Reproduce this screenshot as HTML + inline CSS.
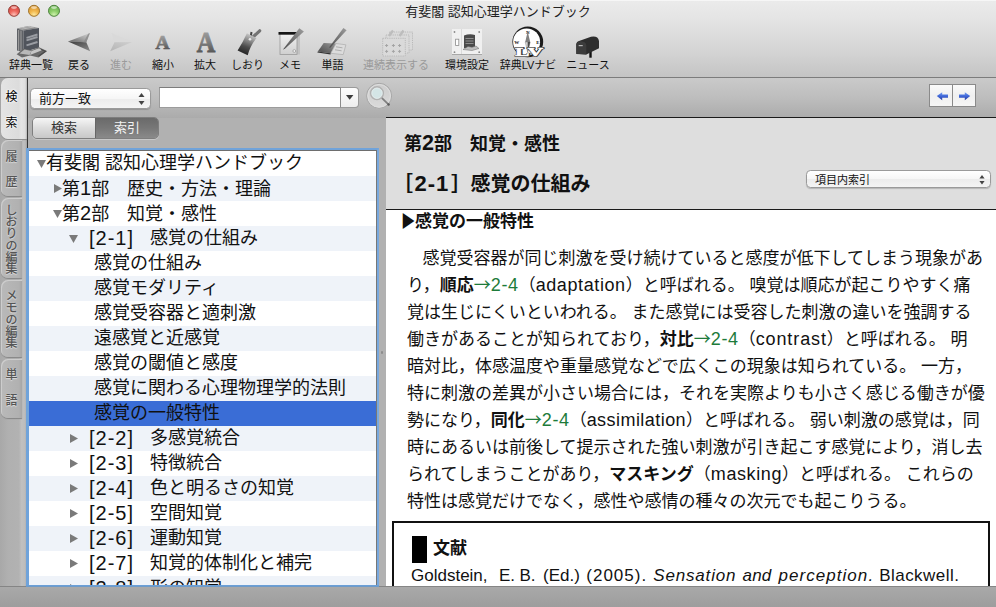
<!DOCTYPE html>
<html lang="ja">
<head>
<meta charset="utf-8">
<title>有斐閣 認知心理学ハンドブック</title>
<style>
html,body{margin:0;padding:0;}
body{width:996px;height:607px;overflow:hidden;position:relative;background:#b4b4b4;
 font-family:"Liberation Sans","Noto Sans CJK JP",sans-serif;color:#000;}
.abs{position:absolute;}
#win{position:absolute;left:0;top:0;width:996px;height:607px;overflow:hidden;}
/* toolbar */
#tb{position:absolute;left:0;top:0;width:996px;height:77px;
 background:linear-gradient(#ebebeb 0,#e4e4e4 20px,#d2d2d2 55px,#c4c4c4 77px);}
#tbline{position:absolute;left:0;top:77px;width:996px;height:1px;background:#7c7c7c;}
#title{position:absolute;left:0;top:3px;width:996px;text-align:center;font-size:13px;line-height:18px;color:#222;}
.tl{position:absolute;top:5px;width:12px;height:12px;border-radius:50%;box-sizing:border-box;}
.tbl{position:absolute;top:57px;font-size:11px;line-height:16px;color:#111;white-space:nowrap;text-align:center;transform:translateX(-50%);}
.tbl.dis{color:#9a9a9a;}
/* main bg */
#main{position:absolute;left:0;top:78px;width:996px;height:508px;background:#b1b1b1;}
#topbar{position:absolute;left:0;top:78px;width:996px;height:40px;background:linear-gradient(#cacaca,#bdbdbd 50%,#ababab);}
#lstrip{position:absolute;left:0;top:78px;width:27px;height:508px;background:linear-gradient(90deg,#a8a8a8,#b0b0b0 30%,#b2b2b2 70%,#c0c0c0 80%,#bcbcbc 93%,#a0a0a0);}
#lline{position:absolute;left:27px;top:78px;width:1px;height:70px;background:#333;}
#bottom{position:absolute;left:0;top:586px;width:996px;height:21px;background:linear-gradient(#a9a9a9,#9d9d9d);border-top:1px solid #858585;box-sizing:border-box;}
/* side tabs */
.vtab{position:absolute;left:1px;width:21px;box-sizing:border-box;border-radius:7px 0 0 7px;
 background:linear-gradient(90deg,#b9b9b9 0,#b1b1b1 85%,#a6a6a6 100%);color:#555;font-weight:500;text-shadow:0 1px 1px #dcdcdc,0 0 2px #d0d0d0;
 box-shadow:0 1px 1px #868686, inset 1px 1px 0 #cdcdcd;}
.vtab span{position:absolute;left:-1.500px;width:24px;text-align:center;line-height:14px;font-size:12px;}
.vtab.on{width:26px;background:linear-gradient(90deg,#e4e4e4 0,#dcdcdc 68%,#e4e4e4 78%,#dedede 93%,#b4b4b4 100%);color:#000;font-weight:400;text-shadow:0 0 2px #fff,0 0 3px #fff,0 0 3px #fff;box-shadow:0 1px 1px #8a8a8a;}
/* left controls */
.pop{position:absolute;box-sizing:border-box;border:1px solid #9a9a9a;border-radius:4.5px;background:linear-gradient(#ffffff,#f6f6f6 50%,#ececec 51%,#f4f4f4);box-shadow:0 1px 1px rgba(0,0,0,.18);}
.pop span{position:absolute;white-space:nowrap;color:#111;}
#inp{position:absolute;left:159px;top:87px;width:182px;height:21px;box-sizing:border-box;background:#fff;border:1px solid #9c9c9c;border-top-color:#7c7c7c;}
#dd{position:absolute;left:340px;top:87px;width:19px;height:21px;box-sizing:border-box;border:1px solid #9a9a9a;border-left-color:#8a8a8a;border-radius:0 4px 4px 0;background:linear-gradient(#fdfdfd,#ededed);}
#seg{position:absolute;left:32px;top:117px;width:127px;height:22px;box-sizing:border-box;border:1px solid #7e7e7e;border-radius:5px;overflow:hidden;box-shadow:0 1px 0 rgba(255,255,255,.3);}
#seg1{position:absolute;left:0;top:0;width:62px;height:20px;background:linear-gradient(#f6f6f6,#dcdcdc 50%,#c8c8c8);font-size:13px;line-height:19px;text-align:center;color:#333;}
#seg2{position:absolute;left:62px;top:0;width:63px;height:20px;background:linear-gradient(#6a6a6a,#777 50%,#8a8a8a);font-size:13px;line-height:19px;text-align:center;color:#f2f2f2;border-left:1px solid #666;box-sizing:border-box;}
#list{position:absolute;left:26px;top:148px;width:353px;height:440px;box-sizing:border-box;border:3px solid #70a3da;border-top-width:2px;border-right:2px solid #78a8de;background:#fff;overflow:hidden;}
#listin{position:absolute;left:0;top:0;width:348px;height:440px;box-sizing:border-box;border-top:1px solid #6e6e6e;border-right:1px solid #777;}
.row{position:absolute;left:0;width:347px;height:25px;font-size:18px;line-height:25px;white-space:nowrap;color:#111;}
.row.alt{background:#eff3f9;}
.row.sel{background:#3a6dd6;}
.row .en{font-size:20px;}
.row .br{font-size:20px;letter-spacing:1px;}
#split{position:absolute;left:381px;top:351px;width:2px;height:3px;background:#8c8c8c;border-radius:1px;}
/* right */
#rline1{position:absolute;left:386px;top:117px;width:610px;height:1px;background:#1a1a1a;}
#rhead{position:absolute;left:386px;top:118px;width:610px;height:91px;background:#dedede;}
#rline2{position:absolute;left:386px;top:209px;width:610px;height:1px;background:#1a1a1a;}
#content{position:absolute;left:386px;top:210px;width:610px;height:376px;background:#fff;}
#ctext{position:absolute;left:386px;top:209px;width:610px;height:377px;overflow:hidden;}
#nav{position:absolute;left:929px;top:84px;width:47px;height:23px;box-sizing:border-box;border:1px solid #8a8a8a;background:linear-gradient(#fafafa,#f0f0f0 50%,#f6f6f6);}
#navd{position:absolute;left:22px;top:0;width:1px;height:21px;background:#8a8a8a;}
.h1{position:absolute;font-size:18px;line-height:26px;font-weight:700;white-space:nowrap;color:#111;}
.h1 .en{font-size:21.500px;}
.h2{position:absolute;font-size:20px;line-height:30px;font-weight:700;white-space:nowrap;color:#111;}
.h2 .en{font-size:22px;letter-spacing:1px;}
#refbox{position:absolute;left:6px;top:312px;width:598px;height:80px;box-sizing:border-box;border:2px solid #111;}
#refmark{position:absolute;left:26px;top:327px;width:15px;height:27px;background:#000;}
.p.ref{font-size:17px;}
#listbot{position:absolute;left:26px;top:585px;width:353px;height:2px;background:#6a9fd6;opacity:.85;}
.p{position:absolute;left:21px;font-size:17px;line-height:27px;white-space:nowrap;color:#111;}
.p .en{font-size:18px;line-height:1px;letter-spacing:0.6px;}
.ar{font-family:"Noto Sans CJK JP",sans-serif;line-height:1px;}
.p .sp{font-size:17px;}
b{font-weight:700;}
.g{color:#1e7b3a;}
</style>
</head>
<body>
<div id="win">
<div id="tb"></div>
<div id="tbline"></div>
<div class="abs" style="left:0;top:0;width:996px;height:1px;background:#f6f6f6"></div>
<div id="title">有斐閣 認知心理学ハンドブック</div>
<svg class="abs" style="left:0;top:0" width="996" height="77" viewBox="0 0 996 77">
<defs>
<radialGradient id="gr" cx="50%" cy="88%" r="75%"><stop offset="0" stop-color="#ffc4bb"/><stop offset=".5" stop-color="#ee6a60"/><stop offset="1" stop-color="#d94a42"/></radialGradient>
<radialGradient id="gy" cx="50%" cy="88%" r="75%"><stop offset="0" stop-color="#fdeaa0"/><stop offset=".5" stop-color="#f2b84e"/><stop offset="1" stop-color="#dc9a34"/></radialGradient>
<radialGradient id="gg" cx="50%" cy="88%" r="75%"><stop offset="0" stop-color="#d2f4b0"/><stop offset=".5" stop-color="#90cf6c"/><stop offset="1" stop-color="#6db652"/></radialGradient>
<linearGradient id="gA" x1="0" y1="0" x2="0" y2="1"><stop offset="0" stop-color="#b0b0b0"/><stop offset=".5" stop-color="#7e7e7e"/><stop offset="1" stop-color="#444"/></linearGradient>
<linearGradient id="gTag" x1="0.6" y1="0" x2="0.3" y2="1"><stop offset="0" stop-color="#cccccc"/><stop offset=".3" stop-color="#8c8c8c"/><stop offset=".6" stop-color="#4c4c4c"/><stop offset="1" stop-color="#1e1e1e"/></linearGradient>
<linearGradient id="gPaper" x1="0" y1="0" x2="0" y2="1"><stop offset="0" stop-color="#f2f2f2"/><stop offset="1" stop-color="#cfcfcf"/></linearGradient>
<linearGradient id="gPen" x1="0" y1="1" x2="1" y2="0"><stop offset="0" stop-color="#4e4e4e"/><stop offset="1" stop-color="#9c9c9c"/></linearGradient>
<linearGradient id="gBackU" x1="0" y1="1" x2="1" y2="0"><stop offset="0" stop-color="#5e5e5e"/><stop offset=".55" stop-color="#a6a6a6"/><stop offset="1" stop-color="#d4d4d4"/></linearGradient>
<linearGradient id="gBackL" x1="0" y1="0" x2="1" y2="1"><stop offset="0" stop-color="#3c3c3c"/><stop offset="1" stop-color="#8c8c8c"/></linearGradient>
<linearGradient id="gFwdL" x1="1" y1="0" x2="0" y2="1"><stop offset="0" stop-color="#d0d0d0"/><stop offset="1" stop-color="#b4b4b4"/></linearGradient>
<linearGradient id="gPage" x1="1" y1="0" x2="0" y2="1"><stop offset="0" stop-color="#9a9a9a"/><stop offset="1" stop-color="#484848"/></linearGradient>
</defs>
<!-- traffic lights -->
<circle cx="14" cy="10.800" r="5.500" fill="url(#gr)" stroke="#95413a" stroke-width="1"/>
<circle cx="34" cy="10.800" r="5.500" fill="url(#gy)" stroke="#a0742c" stroke-width="1"/>
<circle cx="54" cy="10.800" r="5.500" fill="url(#gg)" stroke="#4f8540" stroke-width="1"/>
<g fill="#fff" opacity=".55"><ellipse cx="14" cy="7.600" rx="3" ry="1.400"/><ellipse cx="34" cy="7.600" rx="3" ry="1.400"/><ellipse cx="54" cy="7.600" rx="3" ry="1.400"/></g>
<!-- books -->
<g>
<polygon points="17,28.6 28,26 39,28 23.5,30.4" fill="#8c8c8c"/>
<path d="M19.200 28.300L30 26.300M21.400 29.200L34 27" stroke="#c4c4c4" stroke-width=".8"/>
<polygon points="17,28.600 23.500,30.400 23.500,52.300 17,50.500" fill="#5e6166"/>
<polygon points="23.500,30.400 39,28 39,47.500 23.500,52.300" fill="#50545c"/>
<path d="M18.600 30V50.800M21 30.600V51.500" stroke="#9c9c9c" stroke-width="1.100"/>
<path d="M26.500 37.800L37.500 34.500M26.500 40.300L37.500 37M26.500 45.300L37.500 42" stroke="#9a9da3" stroke-width="1.900"/>
<polygon points="16.600,54.300 23.500,48.800 31.500,50.200 39,47.300 47,51 38.500,57.500 30,55.600 22,57.600" fill="#6a6a6a"/>
<polygon points="19.500,53.600 24.500,49.600 31.500,51 29.500,55" fill="#b9b9b9"/>
<polygon points="31.500,51 39,48.300 42,50.300 30,55" fill="#c6c6c6"/>
<path d="M41 49.500L45.500 51.300L38.500 56.300" stroke="#4a4a4a" stroke-width="1.200" fill="none"/>
</g>
<!-- back -->
<polygon points="68,41.5 90,33 86.3,42.3" fill="url(#gBackU)"/>
<polygon points="68,41.5 86.3,42.3 90.2,51.2" fill="url(#gBackL)"/>
<polygon points="86.300,42.300 90,33 88.200,33.700 83.500,42.200" fill="#8a8a8a" opacity=".8"/>
<!-- forward (disabled) -->
<polygon points="132.3,41.9 111.4,33 114.5,42.3" fill="#d9d9d9"/>
<polygon points="132.3,41.9 114.5,42.3 110.2,51.2" fill="url(#gFwdL)"/>
<!-- A small / large -->
<text x="162.6" y="49" font-family="Liberation Serif,serif" font-weight="700" font-size="19.5" text-anchor="middle" fill="url(#gA)" stroke="url(#gA)" stroke-width=".7">A</text>
<text x="206" y="52" font-family="Liberation Serif,serif" font-weight="700" font-size="29.5" text-anchor="middle" fill="url(#gA)" stroke="url(#gA)" stroke-width=".9" textLength="18.5" lengthAdjust="spacingAndGlyphs">A</text>
<!-- bookmark tag -->
<path d="M251.5 38.5L259.7 30.8" stroke="#747474" stroke-width="3.2" stroke-linecap="round"/>
<path d="M250.5 38L251.5 32" stroke="#444" stroke-width="2"/>
<path d="M246.9 33.2L256.5 38Q250 46 247.7 55.3L237.6 50.5Q243 42 246.9 33.2Z" fill="url(#gTag)"/>
<circle cx="250" cy="39.3" r="1.3" fill="#e8e8e8"/>
<!-- memo -->
<rect x="297" y="35" width="3" height="19.500" fill="#c2c2c2"/>
<rect x="280" y="33" width="17" height="21.500" fill="url(#gPaper)" stroke="#9a9a9a" stroke-width=".8"/>
<rect x="278.500" y="32" width="19" height="2.700" fill="#161616"/>
<circle cx="294.300" cy="51" r="1.400" fill="#f4f4f4" stroke="#909090" stroke-width=".7"/>
<polygon points="282.800,49.800 299.300,28.200 303.900,31.500 285.200,48.600" fill="url(#gPen)"/>
<!-- tango (notebook + pen) -->
<polygon points="317.800,51.400 323.700,42.900 336,43.500 330.800,53.300" fill="url(#gPage)"/>
<polygon points="317.800,51.400 330.800,53.300 330.500,54.500 317.300,52.500" fill="#333"/>
<polygon points="336,43.500 345.900,44.800 343.200,54.600 330.800,53.300" fill="#dcdcdc" stroke="#a4a4a4" stroke-width=".6"/>
<path d="M336 46.800L342.500 47.800M335 49.800L341.600 50.800" stroke="#a8a8a8" stroke-width=".9"/>
<polygon points="329,47.400 343.400,28 346.600,30.200 330.400,47.800" fill="url(#gPen)"/>
<!-- renzoku (disabled) -->
<g fill="#dadada" stroke="#b6b6b6" stroke-width=".9" stroke-dasharray="1.2 1">
<rect x="389.5" y="32" width="23" height="18"/>
<rect x="386" y="35" width="23" height="18"/>
<rect x="382.7" y="38.3" width="22.6" height="17.7"/>
</g>
<path d="M389 36L393 30.5M399.5 36L403.5 30.5" stroke="#bdbdbd" stroke-width="2.4"/>
<path d="M385.1 45.5h3M386.6 44v3M391.9 45.5h3M393.4 44v3M398.1 45.5h3M399.6 44v3M385.1 51.4h3M386.6 49.9v3M391.9 51.4h3M393.4 49.9v3M398.1 51.4h3M399.6 49.9v3" stroke="#a4a4a4" stroke-width="1"/>
<!-- kankyo settei -->
<rect x="452" y="29" width="30" height="25.5" fill="#f0f0f0"/>
<rect x="452" y="54" width="30" height="1" fill="#a8a8a8"/>
<rect x="461" y="29" width="1" height="25" fill="#dadada"/>
<g fill="#8a8a8a"><circle cx="454.5" cy="32" r=".9"/><circle cx="479.2" cy="32" r=".9"/><circle cx="454.5" cy="52.2" r=".9"/><circle cx="479.2" cy="52.2" r=".9"/></g>
<rect x="455.6" y="39.2" width="3.2" height="6.3" fill="#fff" stroke="#8c8c8c" stroke-width=".8"/>
<path d="M464 35.5Q469.5 33.5 475 35V48H464Z" fill="#4a4a4a"/>
<path d="M465.5 38.5H473.5M465.5 41H473.5M465.5 43.5H473.5" stroke="#8e8e8e" stroke-width="1"/>
<path d="M463 49.5L468 46.5L472 47.3L476 46L479 48.5L472 50.5Z" fill="#bdbdbd" stroke="#6a6a6a" stroke-width=".5"/>
<!-- LV navi -->
<circle cx="527.800" cy="41.800" r="15.400" fill="#1a1a1a"/>
<circle cx="526.600" cy="41.900" r="13.500" fill="#fff"/>
<polygon points="527.700,31.500 530.200,42 525.200,42" fill="#808080"/>
<polygon points="527.700,52.500 530.200,42 525.200,42" fill="#d6d6d6" stroke="#777" stroke-width=".4"/>
<polygon points="527.700,52.500 530.200,42 527.700,42" fill="#4a4a4a"/>
<g font-family="Liberation Serif,serif" font-weight="700" font-size="5" fill="#111" text-anchor="middle"><text x="527.700" y="33.800">N</text><text x="516.800" y="43.800">W</text><text x="538" y="43.800">E</text></g>
<text x="529.400" y="56.300" font-family="Liberation Serif,serif" font-weight="700" font-size="12.500" text-anchor="middle" textLength="28" lengthAdjust="spacingAndGlyphs" fill="#3a3a3a" stroke="#3a3a3a" stroke-width="1.800" stroke-linejoin="round">LV</text>
<text x="529" y="56" font-family="Liberation Serif,serif" font-weight="700" font-size="12.500" text-anchor="middle" textLength="28" lengthAdjust="spacingAndGlyphs" fill="#fff" stroke="#fff" stroke-width=".5">LV</text>
<!-- mailbox -->
<rect x="589.3" y="50" width="2.4" height="7.7" fill="#111"/>
<path d="M576.3 54V44Q576.5 41.5 579 41L591 36.8Q598 35.5 599 41V48.3L586.3 54.6Z" fill="#2d2d2d"/>
<path d="M576.3 53.8V44.5Q576.5 41.5 581 41.2Q586.3 41.5 586.3 45.5V54.6Z" fill="#3c3c3c"/>
<rect x="578.7" y="45" width="4" height="1.2" fill="#b5b5b5"/>

</svg>
<div class="tbl" style="left:31px">辞典一覧</div>
<div class="tbl" style="left:79px">戻る</div>
<div class="tbl dis" style="left:121px">進む</div>
<div class="tbl" style="left:163px">縮小</div>
<div class="tbl" style="left:205px">拡大</div>
<div class="tbl" style="left:247.5px">しおり</div>
<div class="tbl" style="left:290px">メモ</div>
<div class="tbl" style="left:332.5px">単語</div>
<div class="tbl dis" style="left:396px">連続表示する</div>
<div class="tbl" style="left:467px">環境設定</div>
<div class="tbl" style="left:528px">辞典LVナビ</div>
<div class="tbl" style="left:588px">ニュース</div>
<div id="main"></div>
<div id="topbar"></div>
<div id="lstrip"></div>
<div id="lline"></div>
<!-- vertical tabs -->
<div class="vtab on" style="top:78px;height:61px"><span style="top:12px">検</span><span style="top:38px">索</span></div>
<div class="vtab" style="top:140px;height:56px"><span style="top:10px">履</span><span style="top:35px">歴</span></div>
<div class="vtab" style="top:198px;height:80px"><span style="top:6px">し</span><span style="top:17px">お</span><span style="top:29px">り</span><span style="top:41px">の</span><span style="top:53px">編</span><span style="top:64px">集</span></div>
<div class="vtab" style="top:280px;height:77px"><span style="top:9px">メ</span><span style="top:21px">モ</span><span style="top:33px">の</span><span style="top:45px">編</span><span style="top:56px">集</span></div>
<div class="vtab" style="top:359px;height:59px"><span style="top:9px">単</span><span style="top:35px">語</span></div>
<!-- controls -->
<div class="pop" style="left:30px;top:88px;width:121px;height:21px"><span style="left:8px;top:2px;font-size:13px;line-height:16px">前方一致</span>
<svg class="abs" style="left:107px;top:4px" width="7" height="12"><path d="M3.5 0L6.5 4H.5ZM3.5 12L6.500 8H.5Z" fill="#444"/></svg></div>
<div id="inp"></div>
<div id="dd"><svg class="abs" style="left:5px;top:7px" width="8" height="5"><path d="M0 0H7.4L3.700 4.800Z" fill="#3c3c3c"/></svg></div>
<svg class="abs" style="left:365px;top:82px" width="30" height="30" viewBox="0 0 30 30">
<defs><linearGradient id="sb" x1="0" y1="0" x2="0" y2="1"><stop offset="0" stop-color="#cdcdcd"/><stop offset="1" stop-color="#dadada"/></linearGradient></defs>
<circle cx="14.100" cy="13.800" r="12.500" fill="url(#sb)" stroke="#a6a6a6" stroke-width="1"/>
<circle cx="14.100" cy="13.800" r="11.300" fill="none" stroke="#dedede" stroke-width="1"/>
<path d="M16.500 15.700L23.400 22.300" stroke="#808080" stroke-width="1.800" stroke-linecap="round"/>
<circle cx="23.600" cy="22.500" r="1.200" fill="#5c5c5c"/>
<circle cx="12" cy="11.200" r="6.300" fill="#d4e5e6" stroke="#b2b2b2" stroke-width="1.600"/>
<circle cx="12" cy="11.200" r="5.200" fill="none" stroke="#e6eeee" stroke-width=".8"/>
</svg>
<div id="seg"><div id="seg1">検索</div><div id="seg2">索引</div></div>
<div id="list"><div id="listin">
<div class="row" style="top:0px"><svg class="abs" style="left:8px;top:9px" width="10" height="8"><path d="M0 0H9L4.5 8Z" fill="#7a7a7a"/></svg><span class="abs" style="left:17px;top:0">有斐閣 認知心理学ハンドブック</span></div>
<div class="row alt" style="top:25px"><svg class="abs" style="left:25px;top:8px" width="8" height="10"><path d="M0 0V9L8 4.5Z" fill="#7a7a7a"/></svg><span class="abs" style="left:33px;top:0">第<span class="en">1</span>部　歴史・方法・理論</span></div>
<div class="row" style="top:50px"><svg class="abs" style="left:24px;top:9px" width="10" height="8"><path d="M0 0H9L4.5 8Z" fill="#7a7a7a"/></svg><span class="abs" style="left:33px;top:0">第<span class="en">2</span>部　知覚・感性</span></div>
<div class="row alt" style="top:75px"><svg class="abs" style="left:40px;top:9px" width="10" height="8"><path d="M0 0H9L4.5 8Z" fill="#7a7a7a"/></svg><span class="abs" style="left:60px;top:0"><span class="br">[2-1]</span><span class="abs" style="left:61px">感覚の仕組み</span></span></div>
<div class="row" style="top:100px"><span class="abs" style="left:65px;top:0">感覚の仕組み</span></div>
<div class="row alt" style="top:125px"><span class="abs" style="left:65px;top:0">感覚モダリティ</span></div>
<div class="row" style="top:150px"><span class="abs" style="left:65px;top:0">感覚受容器と適刺激</span></div>
<div class="row alt" style="top:175px"><span class="abs" style="left:65px;top:0">遠感覚と近感覚</span></div>
<div class="row" style="top:200px"><span class="abs" style="left:65px;top:0">感覚の閾値と感度</span></div>
<div class="row alt" style="top:225px"><span class="abs" style="left:65px;top:0">感覚に関わる心理物理学的法則</span></div>
<div class="row sel" style="top:250px"><span class="abs" style="left:65px;top:0">感覚の一般特性</span></div>
<div class="row alt" style="top:275px"><svg class="abs" style="left:41px;top:8px" width="8" height="10"><path d="M0 0V9L8 4.5Z" fill="#7a7a7a"/></svg><span class="abs" style="left:60px;top:0"><span class="br">[2-2]</span><span class="abs" style="left:61px">多感覚統合</span></span></div>
<div class="row" style="top:300px"><svg class="abs" style="left:41px;top:8px" width="8" height="10"><path d="M0 0V9L8 4.5Z" fill="#7a7a7a"/></svg><span class="abs" style="left:60px;top:0"><span class="br">[2-3]</span><span class="abs" style="left:61px">特徴統合</span></span></div>
<div class="row alt" style="top:325px"><svg class="abs" style="left:41px;top:8px" width="8" height="10"><path d="M0 0V9L8 4.5Z" fill="#7a7a7a"/></svg><span class="abs" style="left:60px;top:0"><span class="br">[2-4]</span><span class="abs" style="left:61px">色と明るさの知覚</span></span></div>
<div class="row" style="top:350px"><svg class="abs" style="left:41px;top:8px" width="8" height="10"><path d="M0 0V9L8 4.5Z" fill="#7a7a7a"/></svg><span class="abs" style="left:60px;top:0"><span class="br">[2-5]</span><span class="abs" style="left:61px">空間知覚</span></span></div>
<div class="row alt" style="top:375px"><svg class="abs" style="left:41px;top:8px" width="8" height="10"><path d="M0 0V9L8 4.5Z" fill="#7a7a7a"/></svg><span class="abs" style="left:60px;top:0"><span class="br">[2-6]</span><span class="abs" style="left:61px">運動知覚</span></span></div>
<div class="row" style="top:400px"><svg class="abs" style="left:41px;top:8px" width="8" height="10"><path d="M0 0V9L8 4.5Z" fill="#7a7a7a"/></svg><span class="abs" style="left:60px;top:0"><span class="br">[2-7]</span><span class="abs" style="left:61px">知覚的体制化と補完</span></span></div>
<div class="row alt" style="top:425px"><svg class="abs" style="left:41px;top:8px" width="8" height="10"><path d="M0 0V9L8 4.5Z" fill="#7a7a7a"/></svg><span class="abs" style="left:60px;top:0"><span class="br">[2-8]</span><span class="abs" style="left:61px">形の知覚</span></span></div>
</div></div>
<div id="split"></div>
<div id="rline1"></div>
<div id="rhead"></div>
<div id="rline2"></div>
<div id="content"></div>
<div id="nav"><div id="navd"></div>
<svg class="abs" style="left:0;top:0" width="46" height="22" viewBox="0 0 46 22">
<defs><linearGradient id="ga" x1="0" y1="0" x2="0" y2="1"><stop offset="0" stop-color="#6f9cf0"/><stop offset=".5" stop-color="#3f66d8"/><stop offset="1" stop-color="#24389a"/></linearGradient></defs>
<path d="M6.800 11L12.200 7.200V9.600H18V12.800H12.200V15.200Z" fill="url(#ga)"/>
<path d="M40.200 11L34.800 7.200V9.600H29V12.800H34.800V15.200Z" fill="url(#ga)"/>
</svg></div>
<div class="h1" style="left:404px;top:130px">第<span class="en">2</span>部　知覚・感性</div>
<div class="h2" style="left:393px;top:169px">［</div>
<div class="h2" style="left:414.5px;top:169px"><span class="en">2-1</span></div>
<div class="h2" style="left:451px;top:169px">］</div>
<div class="h2" style="left:470.5px;top:169px">感覚の仕組み</div>
<div class="pop" style="left:806px;top:170px;width:185px;height:18px"><span style="left:8px;top:2px;font-size:11px;line-height:15px">項目内索引</span>
<svg class="abs" style="left:172px;top:4px" width="6" height="10"><path d="M3 0L5.600 3.500H.4ZM3 9.500L5.600 6H.4Z" fill="#444"/></svg></div>
<div id="ctext">
<div class="p" style="left:14.600px;top:-1px"><b><span style="display:inline-block;width:14.400px"><span style="display:inline-block;transform:scaleX(.84);transform-origin:0 50%">▶</span></span>感覚の一般特性</b></div>
<div class="p" style="top:36px"><span style="display:inline-block;width:15.500px"></span>感覚受容器が同じ刺激を受け続けていると感度が低下してしまう現象があ</div>
<div class="p" style="top:63px">り，<b>順応</b><span class="g"><span class="ar">→</span><span class="en">2-4</span></span>（<span class="en">adaptation</span>）と呼ばれる。<span class="sp"> </span>嗅覚は順応が起こりやすく痛</div>
<div class="p" style="top:90px">覚は生じにくいといわれる。<span class="sp"> </span>また感覚には受容した刺激の違いを強調する</div>
<div class="p" style="top:117px">働きがあることが知られており，<b>対比</b><span class="g"><span class="ar">→</span><span class="en">2-4</span></span>（<span class="en" style="letter-spacing:.9px">contrast</span>）と呼ばれる。<span class="sp"> </span>明</div>
<div class="p" style="top:144px">暗対比，体感温度や重量感覚などで広くこの現象は知られている。<span class="sp"> </span>一方，</div>
<div class="p" style="top:171px">特に刺激の差異が小さい場合には，それを実際よりも小さく感じる働きが優</div>
<div class="p" style="top:198px">勢になり，<b>同化</b><span class="g"><span class="ar">→</span><span class="en">2-4</span></span>（<span class="en" style="letter-spacing:.45px">assimilation</span>）と呼ばれる。<span class="sp"> </span>弱い刺激の感覚は，同</div>
<div class="p" style="top:225px">時にあるいは前後して提示された強い刺激が引き起こす感覚により，消し去</div>
<div class="p" style="top:252px">られてしまうことがあり，<b>マスキング</b>（<span class="en">masking</span>）と呼ばれる。<span class="sp"> </span>これらの</div>
<div class="p" style="top:279px">特性は感覚だけでなく，感性や感情の種々の次元でも起こりうる。</div>
<div id="refbox"></div>
<div id="refmark"></div>
<div class="p" style="left:47px;top:326px"><b>文献</b></div>
<div class="p ref" style="left:0;top:353px;width:600px;height:27px"><span class="abs" style="left:25.0px">Goldstein,</span><span class="abs" style="left:113.0px">E.</span><span class="abs" style="left:133.5px">B.</span><span class="abs" style="left:157.0px">(Ed.)</span><span class="abs" style="left:200.3px;letter-spacing:1.00px">(2005).</span><span class="abs" style="left:267.3px;letter-spacing:0.82px"><i>Sensation</i></span><span class="abs" style="left:356.6px;letter-spacing:0.11px"><i>and</i></span><span class="abs" style="left:392.4px;letter-spacing:1.06px"><i>perception.</i></span><span class="abs" style="left:493.2px;letter-spacing:0.46px">Blackwell.</span></div>
</div>
<div id="bottom"></div>
<div id="listbot"></div>
</div>
</body>
</html>
